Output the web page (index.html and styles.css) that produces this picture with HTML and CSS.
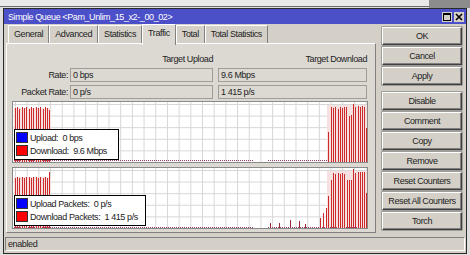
FILE: index.html
```html
<!DOCTYPE html>
<html>
  <head>
    <title>Simple Queue</title>
    <link rel="stylesheet" href="styles.css">
  </head>
  <body>
    <div class="behind-left"></div>
    <div class="behind-right"></div>

    <div class="window">
      <div class="titlebar">
        <span class="title">Simple Queue &lt;Pam_Unlim_15_x2-_00_02&gt;</span>
        <div class="controls">
          <span class="ctl">
            <svg width="8" height="8" viewBox="0 0 8 8"><rect x="0.5" y="0.5" width="7" height="7" fill="none" stroke="#000"/><line x1="0" y1="1.5" x2="8" y2="1.5" stroke="#000"/></svg>
          </span>
          <span class="ctl">
            <svg width="8" height="8" viewBox="0 0 8 8"><path d="M1 1L7 7M7 1L1 7" stroke="#000" stroke-width="1.6"/></svg>
          </span>
        </div>
      </div>

      <div class="main">
        <div class="content">
          <div class="tabs">
            <div class="tab">General</div>
            <div class="tab">Advanced</div>
            <div class="tab">Statistics</div>
            <div class="tab active">Traffic</div>
            <div class="tab">Total</div>
            <div class="tab">Total Statistics</div>
          </div>

          <div class="panel">
            <div class="fields">
              <div></div>
              <div class="head">Target Upload</div>
              <div class="head">Target Download</div>

              <div class="label">Rate:</div>
              <div class="field">0 bps</div>
              <div class="field down">9.6 Mbps</div>

              <div class="label">Packet Rate:</div>
              <div class="field">0 p/s</div>
              <div class="field down">1 415 p/s</div>
            </div>

            <div class="graph">
              <svg class="plot" width="354" height="60" viewBox="0 0 354 60" shape-rendering="crispEdges">
                <rect x="1" y="6" width="37" height="54" fill="#f6e0e0"/>
                <rect x="314" y="3" width="40" height="57" fill="#f6e0e0"/>
                <path d="M1 58H240M255 58H314" stroke="#9a3c6a" stroke-dasharray="1 1"/>
                <path d="M2.5 6V60M4.5 5V60M6.5 7V60M9.5 5V60M11.5 6V60M13.5 5V60M16.5 7V60M18.5 5V60M20.5 6V60M23.5 5V60M25.5 6V60M27.5 5V60M30.5 7V60M32.5 5V60M34.5 6V60M36.5 8V60" stroke="#cc2a2a"/>
                <path d="M315.5 30V60M318.5 5V60M320.5 6V60M322.5 5V60M325.5 7V60M327.5 5V60M329.5 6V60M331.5 5V60M333.5 5V60M336.5 14V60M338.5 13V60M340.5 2V60M342.5 5V60M345.5 4V60M347.5 5V60M349.5 4V60M351.5 5V60M353.5 26V60" stroke="#cc2a2a"/>
              </svg>
              <div class="legend">
                <div class="legend-row"><span class="swatch up"></span>Upload:&nbsp; 0 bps</div>
                <div class="legend-row"><span class="swatch dn"></span>Download:&nbsp; 9.6 Mbps</div>
              </div>
            </div>

            <div class="graph second">
              <svg class="plot" width="354" height="60" viewBox="0 0 354 60" shape-rendering="crispEdges">
                <rect x="1" y="9" width="37" height="51" fill="#f6e0e0"/>
                <rect x="314" y="3" width="40" height="57" fill="#f6e0e0"/>
                <path d="M1 59H240M255 59H354" stroke="#9a3c6a" stroke-dasharray="1 1"/>
                <path d="M2.5 10V60M4.5 9V60M6.5 10V60M9.5 9V60M11.5 10V60M13.5 9V60M16.5 9V60M18.5 10V60M20.5 9V60M23.5 9V60M25.5 10V60M27.5 9V60M30.5 10V60M32.5 9V60M34.5 10V60M36.5 4V60" stroke="#cc2a2a"/>
                <path d="M257.5 55V60M266.5 55V60M277.5 52V60M286.5 53V60M292.5 56V60" stroke="#9a2a3a"/>
                <path d="M307.5 50V60M310.5 45V60M313.5 40V60M315.5 28V60M318.5 12V60M320.5 5V60M322.5 6V60M325.5 5V60M327.5 6V60M329.5 5V60M331.5 6V60M334.5 12V60M336.5 12V60M338.5 12V60M340.5 1V60M342.5 5V60M345.5 4V60M347.5 4V60M349.5 4V60M351.5 4V60M353.5 25V60" stroke="#cc2a2a"/>
              </svg>
              <div class="legend wide">
                <div class="legend-row"><span class="swatch up"></span>Upload Packets:&nbsp; 0 p/s</div>
                <div class="legend-row"><span class="swatch dn"></span>Download Packets:&nbsp; 1 415 p/s</div>
              </div>
            </div>
          </div>
        </div>

        <div class="buttons">
          <div class="btn">OK</div>
          <div class="btn">Cancel</div>
          <div class="btn apply">Apply</div>
          <div class="btn">Disable</div>
          <div class="btn">Comment</div>
          <div class="btn">Copy</div>
          <div class="btn">Remove</div>
          <div class="btn">Reset Counters</div>
          <div class="btn">Reset All Counters</div>
          <div class="btn">Torch</div>
        </div>
      </div>

      <div class="statusbar">enabled</div>
    </div>
  </body>
</html>
```

FILE: styles.css
```css
body {
  margin: 0;
  width: 470px;
  height: 255px;
  overflow: hidden;
  position: relative;
  background-color: #dedede;
  font-family: "Liberation Sans", Arial, sans-serif;
  font-size: 9px;
  letter-spacing: -0.4px;
  white-space: nowrap;
  color: #000;
}

/* windows sitting behind the dialog */
.behind-left {
  position: absolute;
  top: 0;
  left: 0;
  width: 429px;
  height: 6px;
  background-color: #e9e9e9;
  border-bottom: 1px solid #6a6a6a;
}
.behind-right {
  position: absolute;
  top: 0;
  left: 429px;
  width: 41px;
  height: 8px;
  background-color: #8c8c8c;
}

.window {
  position: relative;
  margin: 8px 0 0 3px;
  width: 462px;
  border: 1px solid #2b2b2b;
  background-color: #d4d0c8;
}

.titlebar {
  height: 15px;
  background-color: #4c50c8;
  color: #fff;
  display: flex;
  align-items: center;
  justify-content: space-between;
  padding: 0 2px 0 4px;
}
.controls {
  display: flex;
  gap: 2px;
}
.ctl {
  width: 10px;
  height: 10px;
  background-color: #d4d0c8;
  display: flex;
  align-items: center;
  justify-content: center;
}

.main {
  display: flex;
  padding-left: 2px;
}
.content {
  width: 370px;
}

.tabs {
  display: flex;
  padding: 1px 0 0 2px;
  height: 18px;
}
.tab {
  height: 17px;
  line-height: 17px;
  padding: 0 5px;
  border-top: 1px solid #fff;
  border-left: 1px solid #fff;
  border-right: 1px solid #808080;
  background-color: #d4d0c8;
  color: #222;
}
.tab.active {
  position: relative;
  margin-top: -1px;
  height: 20px;
  background-color: #dcd9d2;
  z-index: 1;
}

.panel {
  height: 188px;
  border-top: 1px solid #fff;
  border-left: 1px solid #fff;
  border-right: 1px solid #808080;
  border-bottom: 1px solid #808080;
  background-color: #dcd9d2;
}

.fields {
  display: grid;
  grid-template-columns: 61px 143px 152px;
  grid-template-rows: 12px 14px 14px;
  column-gap: 2px;
  row-gap: 3px;
  margin-top: 9px;
}
.head {
  text-align: right;
  line-height: 12px;
  color: #222;
}
.label {
  text-align: right;
  line-height: 14px;
  color: #222;
}
.field {
  border: 1px solid #a09d97;
  line-height: 12px;
  padding-left: 2px;
  color: #222;
}
.field.down {
  margin-left: 3px;
}

.graph {
  position: relative;
  margin: 2px 0 0 5px;
  width: 354px;
  height: 60px;
  border: 1px solid #8a8a8a;
  background-color: #fff;
  background-image: linear-gradient(90deg, #d6d6d6 1px, transparent 1px),
    linear-gradient(#d6d6d6 1px, transparent 1px);
  background-size: 11.7px 100%, 100% 11.6px;
  background-position: 2px 0, 0 2px;
}
.graph.second {
  margin-top: 4px;
}
.plot {
  display: block;
}

.legend {
  position: absolute;
  left: 1px;
  top: 27px;
  width: 103px;
  height: 28px;
  padding-top: 1px;
  border: 1px solid #000;
  background-color: #fff;
}
.legend.wide {
  width: 130px;
}
.legend-row {
  display: flex;
  align-items: center;
  height: 13px;
  color: #222;
}
.swatch {
  width: 10px;
  height: 9px;
  margin: 0 2px 0 1px;
  border: 1px solid #333;
}
.swatch.up {
  background-color: #0000ff;
}
.swatch.dn {
  background-color: #ff0000;
}

.buttons {
  display: flex;
  flex-direction: column;
  margin-left: 6px;
  padding-top: 3px;
  width: 80px;
}
.btn {
  height: 16px;
  line-height: 16px;
  margin-bottom: 2px;
  text-align: center;
  color: #222;
  border-top: 1px solid #fff;
  border-left: 1px solid #fff;
  border-right: 1px solid #404040;
  border-bottom: 1px solid #404040;
  box-shadow: inset -1px -1px #808080, 0 0 0 0.5px #6a6a6a;
}
.btn.apply {
  margin-bottom: 7px;
}

.statusbar {
  margin: 4px 1px 2px 1px;
  height: 12px;
  line-height: 12px;
  padding-left: 2px;
  border-top: 1px solid #808080;
  border-left: 1px solid #808080;
  border-right: 1px solid #fff;
  border-bottom: 1px solid #fff;
  color: #222;
}
```
